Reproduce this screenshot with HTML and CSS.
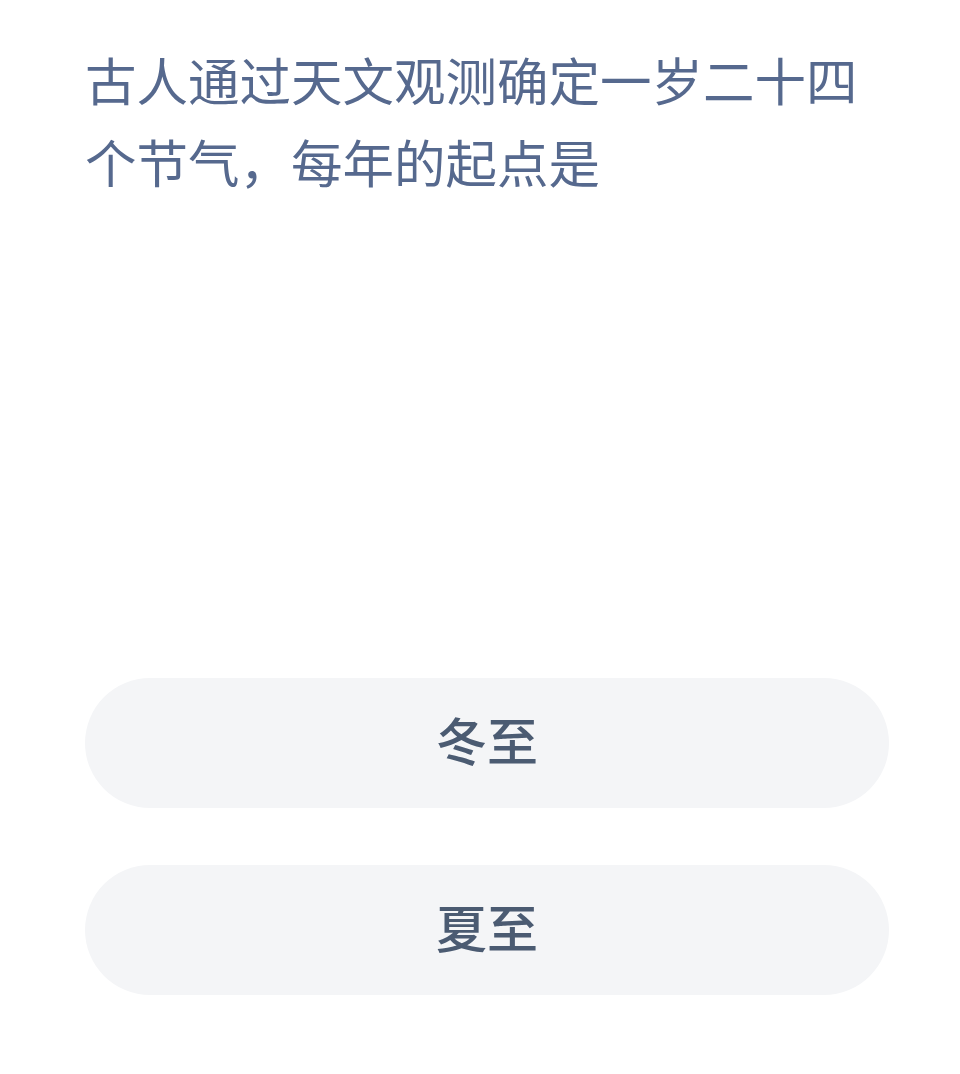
FILE: index.html
```html
<!DOCTYPE html>
<html lang="zh-CN">
<head>
<meta charset="utf-8">
<title>节气问答</title>
<link rel="stylesheet" href="styles.css">
</head>
<body>
<main class="quiz">
  <p class="question">古人通过天文观测确定一岁二十四个节气，每年的起点是</p>
  <div class="options">
    <button class="option" type="button">冬至</button>
    <button class="option" type="button">夏至</button>
  </div>
</main>
</body>
</html>
```
FILE: styles.css
```css
html, body {
  margin: 0;
  padding: 0;
  background: #ffffff;
}

.quiz {
  width: 804px;
  margin-left: 85px;
  padding-top: 38px;
  font-family: "Noto Sans CJK SC", "Noto Sans", sans-serif;
}

.question {
  margin: 0;
  font-size: 51.5px;
  line-height: 82px;
  color: #56698e;
  font-weight: 400;
}

.options {
  display: flex;
  flex-direction: column;
  gap: 57px;
  margin-top: 476px;
}

.option {
  height: 130px;
  border: none;
  border-radius: 65px;
  background: #f4f5f7;
  font-family: inherit;
  font-size: 51px;
  font-weight: 500;
  color: #4b5b72;
  padding: 0 0 8px;
}
```
